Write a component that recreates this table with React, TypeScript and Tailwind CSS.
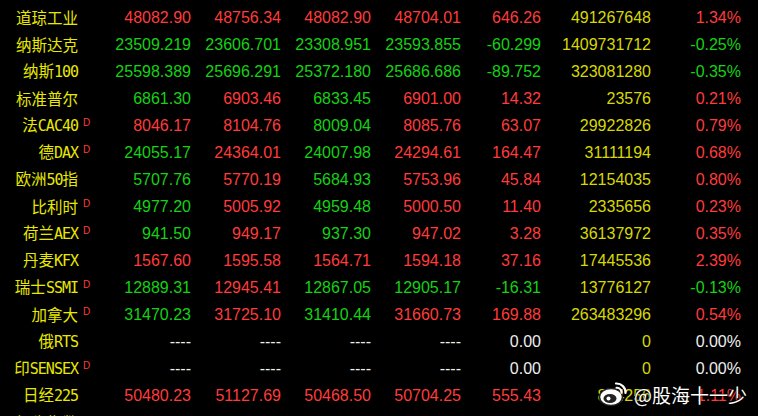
import React from "react";

type Row = {
  name: string;
  d?: boolean;
  v: string[];
  c: string;
};

const rows: Row[] = [
  { name: "道琼工业", v: ["48082.90", "48756.34", "48082.90", "48704.01", "646.26", "491267648", "1.34%"], c: "rrrrryr" },
  { name: "纳斯达克", v: ["23509.219", "23606.701", "23308.951", "23593.855", "-60.299", "1409731712", "-0.25%"], c: "gggggyg" },
  { name: "纳斯100", v: ["25598.389", "25696.291", "25372.180", "25686.686", "-89.752", "323081280", "-0.35%"], c: "gggggyg" },
  { name: "标准普尔", v: ["6861.30", "6903.46", "6833.45", "6901.00", "14.32", "23576", "0.21%"], c: "grgrryr" },
  { name: "法CAC40", d: true, v: ["8046.17", "8104.76", "8009.04", "8085.76", "63.07", "29922826", "0.79%"], c: "rrgrryr" },
  { name: "德DAX", d: true, v: ["24055.17", "24364.01", "24007.98", "24294.61", "164.47", "31111194", "0.68%"], c: "grgrryr" },
  { name: "欧洲50指", v: ["5707.76", "5770.19", "5684.93", "5753.96", "45.84", "12154035", "0.80%"], c: "grgrryr" },
  { name: "比利时", d: true, v: ["4977.20", "5005.92", "4959.48", "5000.50", "11.40", "2335656", "0.23%"], c: "grgrryr" },
  { name: "荷兰AEX", d: true, v: ["941.50", "949.17", "937.30", "947.02", "3.28", "36137972", "0.35%"], c: "grgrryr" },
  { name: "丹麦KFX", v: ["1567.60", "1595.58", "1564.71", "1594.18", "37.16", "17445536", "2.39%"], c: "rrrrryr" },
  { name: "瑞士SSMI", d: true, v: ["12889.31", "12945.41", "12867.05", "12905.17", "-16.31", "13776127", "-0.13%"], c: "grgggyg" },
  { name: "加拿大", d: true, v: ["31470.23", "31725.10", "31410.44", "31660.73", "169.88", "263483296", "0.54%"], c: "grgrryr" },
  { name: "俄RTS", v: ["----", "----", "----", "----", "0.00", "0", "0.00%"], c: "wwwwwyw" },
  { name: "印SENSEX", d: true, v: ["----", "----", "----", "----", "0.00", "0", "0.00%"], c: "wwwwwyw" },
  { name: "日经225", v: ["50480.23", "51127.69", "50468.50", "50704.25", "555.43", "834256", "1.11%"], c: "rrrrryr" },
  { name: "恒生指数", v: ["26130.52", "26210.80", "26055.34", "26190.12", "120.45", "98231455", "0.46%"], c: "rrrrryr" },
];

const colorOf: Record<string, string> = {
  r: "text-[#ff3b3b]",
  g: "text-[#14d214]",
  y: "text-[#d8d800]",
  w: "text-[#eeeeee]",
};

const widths = ["w-[90px]", "w-[90px]", "w-[90px]", "w-[90px]", "w-[80px]", "w-[110px]", "w-[90px]"];

function Name({ text }: { text: string }) {
  const parts = text.split(/([A-Za-z0-9]+)/).filter(Boolean);
  return (
    <>
      {parts.map((p, i) =>
        /^[A-Za-z0-9]+$/.test(p) ? (
          <span
            key={i}
            className="font-['DejaVu_Sans_Mono',monospace] text-[15px] tracking-[-1px]"
          >
            {p}
          </span>
        ) : (
          <span key={i} className="font-['Noto_Sans_CJK_SC',sans-serif] text-[15.5px]">
            {p}
          </span>
        )
      )}
    </>
  );
}

function Weibo() {
  return (
    <svg width="30" height="28" viewBox="0 0 30 28" fill="none">
      <ellipse cx="13" cy="17" rx="11.5" ry="8.5" fill="#fff" stroke="#222" strokeWidth="1.5" />
      <ellipse cx="12" cy="18.5" rx="6.5" ry="4.5" fill="#222" />
      <circle cx="10.5" cy="18.5" r="2" fill="#fff" />
      <path d="M18 3.5a9 9 0 0 1 9.5 9.5" stroke="#fff" strokeWidth="2.2" strokeLinecap="round" />
      <path d="M18.5 7.8a4.5 4.5 0 0 1 5 5" stroke="#fff" strokeWidth="2" strokeLinecap="round" />
    </svg>
  );
}

export default function App() {
  return (
    <div className="relative h-[416px] w-[758px] overflow-hidden bg-black pt-[4px]">
      {rows.map((row) => (
        <div key={row.name} className="flex h-[27px] items-center">
          <div className="w-[79px] whitespace-nowrap pr-[1px] text-right leading-none text-[#e8e800]">
            <Name text={row.name} />
          </div>
          <div className="flex h-full w-[22px] items-start pl-[4px] pt-[6px]">
            {row.d && (
              <span className="font-['Liberation_Sans',sans-serif] text-[10px] leading-none text-[#ff3b3b]">
                D
              </span>
            )}
          </div>
          {row.v.map((val, i) => (
            <div
              key={i}
              className={`${widths[i]} ${colorOf[row.c[i]]} text-right font-['Liberation_Sans',sans-serif] text-[16px] leading-none`}
            >
              {val}
            </div>
          ))}
        </div>
      ))}

      <div className="absolute left-[598px] top-[380px] flex items-center gap-[6px]">
        <Weibo />
        <span className="font-['Noto_Sans_CJK_SC',sans-serif] text-[19px] leading-none text-white [text-shadow:0_0_2px_#000,0_0_1px_#000]">
          @股海十一少
        </span>
      </div>
    </div>
  );
}
